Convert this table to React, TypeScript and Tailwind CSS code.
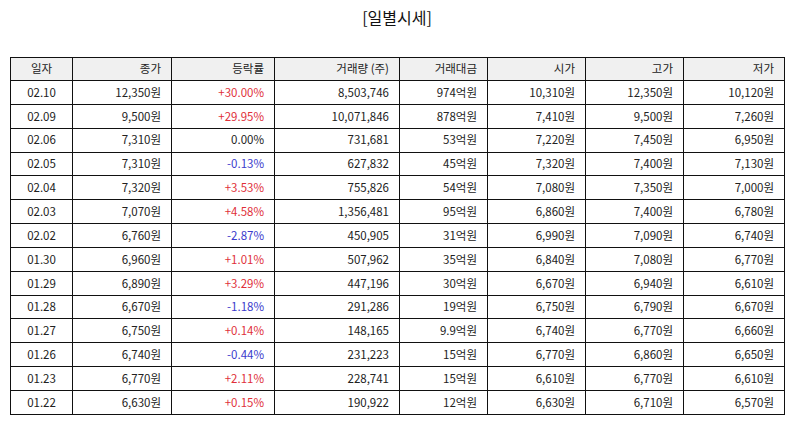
const rows: [string, string, string, string, string, string, string, string][] = [
  ["02.10", "12,350원", "+30.00%", "8,503,746", "974억원", "10,310원", "12,350원", "10,120원"],
  ["02.09", "9,500원", "+29.95%", "10,071,846", "878억원", "7,410원", "9,500원", "7,260원"],
  ["02.06", "7,310원", "0.00%", "731,681", "53억원", "7,220원", "7,450원", "6,950원"],
  ["02.05", "7,310원", "-0.13%", "627,832", "45억원", "7,320원", "7,400원", "7,130원"],
  ["02.04", "7,320원", "+3.53%", "755,826", "54억원", "7,080원", "7,350원", "7,000원"],
  ["02.03", "7,070원", "+4.58%", "1,356,481", "95억원", "6,860원", "7,400원", "6,780원"],
  ["02.02", "6,760원", "-2.87%", "450,905", "31억원", "6,990원", "7,090원", "6,740원"],
  ["01.30", "6,960원", "+1.01%", "507,962", "35억원", "6,840원", "7,080원", "6,770원"],
  ["01.29", "6,890원", "+3.29%", "447,196", "30억원", "6,670원", "6,940원", "6,610원"],
  ["01.28", "6,670원", "-1.18%", "291,286", "19억원", "6,750원", "6,790원", "6,670원"],
  ["01.27", "6,750원", "+0.14%", "148,165", "9.9억원", "6,740원", "6,770원", "6,660원"],
  ["01.26", "6,740원", "-0.44%", "231,223", "15억원", "6,770원", "6,860원", "6,650원"],
  ["01.23", "6,770원", "+2.11%", "228,741", "15억원", "6,610원", "6,770원", "6,610원"],
  ["01.22", "6,630원", "+0.15%", "190,922", "12억원", "6,630원", "6,710원", "6,570원"],
];

const headers = ["일자", "종가", "등락률", "거래량 (주)", "거래대금", "시가", "고가", "저가"];
const widths = ["w-[62px]", "w-[99px]", "w-[103px]", "w-[125px]", "w-[88px]", "w-[98px]", "w-[98px]", ""];

function rateColor(v: string) {
  if (v.startsWith("+")) return "text-[#e0303a]";
  if (v.startsWith("-")) return "text-[#3b3bcc]";
  return "text-[#222]";
}

export default function App() {
  return (
    <div
      className="w-[794px] h-[425px] bg-white text-[#222] overflow-hidden"
      style={{ fontFamily: '"Noto Sans CJK KR", "Noto Sans", sans-serif' }}
    >
      <h1 className="pt-[5px] h-[57px] text-center text-[16px] leading-[24px] text-[#111]">[일별시세]</h1>
      <table className="ml-[10px] w-[775px] border-separate border-spacing-0 border-l border-t border-[#111] table-fixed text-[11.5px]">
        <colgroup>
          {widths.map((w, i) => (
            <col key={i} className={w} />
          ))}
        </colgroup>
        <thead>
          <tr className="h-[23px] bg-[#f0f0f0]">
            {headers.map((h, i) => (
              <th
                key={h}
                className={`border-r border-b border-[#111] font-normal px-[10px] ${i === 0 ? "text-center" : "text-right"}`}
              >
                {h}
              </th>
            ))}
          </tr>
        </thead>
        <tbody>
          {rows.map((r) => (
            <tr key={r[0]} className="h-[23.85px]">
              {r.map((c, i) => (
                <td
                  key={i}
                  className={`border-r border-b border-[#111] px-[10px] py-0 ${i === 0 ? "text-center" : "text-right"} ${i === 2 ? rateColor(c) : ""}`}
                >
                  {c}
                </td>
              ))}
            </tr>
          ))}
        </tbody>
      </table>
    </div>
  );
}
